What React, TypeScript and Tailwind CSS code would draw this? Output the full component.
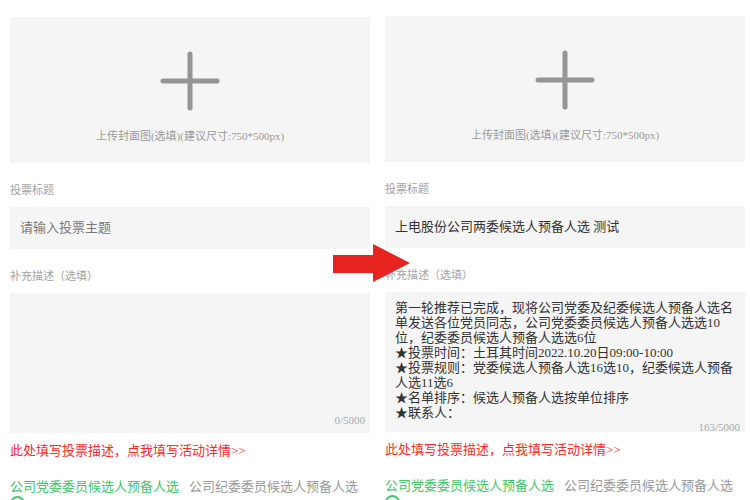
import React from 'react';

const font = { fontFamily: '"Liberation Serif", "Noto Sans CJK SC", serif' };

const PlusIcon: React.FC = () => (
  <svg width="60" height="60" viewBox="0 0 60 60" className="shrink-0">
    <path d="M30 3 V57 M3 30 H57" stroke="#959595" strokeWidth="5" strokeLinecap="round" fill="none" />
  </svg>
);

const descLines = [
  '第一轮推荐已完成，现将公司党委及纪委候选人预备人选名',
  '单发送各位党员同志，公司党委委员候选人预备人选选10',
  '位，纪委委员候选人预备人选选6位',
  '★投票时间：土耳其时间2022.10.20日09:00-10:00',
  '★投票规则：党委候选人预备人选16选10，纪委候选人预备',
  '人选11选6',
  '★名单排序：候选人预备人选按单位排序',
  '★联系人：',
];

type PanelProps = {
  top: string;
  title?: string;
  lines?: string[];
  count: string;
};

const Panel: React.FC<PanelProps> = ({ top, title, lines, count }) => (
  <div className={`w-[360px] flex flex-col ${top}`}>
    {/* cover upload */}
    <div className="h-[146px] bg-[#f5f5f5] flex flex-col items-center">
      <div className="mt-[34px]">
        <PlusIcon />
      </div>
      <div className="mt-[17px] text-[11px] leading-[16px] text-[#9a9a9a]">
        上传封面图(选填)(建议尺寸:750*500px)
      </div>
    </div>

    <div className="mt-[19px] mb-[9px] text-[11px] leading-[16px] text-[#a3a3a3]">投票标题</div>
    <div className="h-[42px] bg-[#f5f5f5] px-[10px] flex items-center text-[13px] leading-[18px]">
      {title ? (
        <span className="text-[#333]">{title}</span>
      ) : (
        <span className="text-[#7a7a7a]">请输入投票主题</span>
      )}
    </div>

    <div className="mt-[19px] mb-[9px] text-[11px] leading-[16px] text-[#a3a3a3]">补充描述（选填）</div>
    <div className="h-[140px] bg-[#f5f5f5] flex flex-col pl-[10px] pr-[5px] pt-[8px] pb-[6px]">
      <div className="text-[13px] leading-[15px] text-[#333] whitespace-nowrap">
        {lines?.map((l) => (
          <div key={l}>{l}</div>
        ))}
      </div>
      <div className="mt-auto self-end text-[11px] leading-[14px] text-[#aaa]">{count}</div>
    </div>

    <div className="mt-[9px] text-[13px] leading-[18px] text-[#ff2b2b]">此处填写投票描述，点我填写活动详情&gt;&gt;</div>

    <div className="mt-[18px] flex items-start gap-[10px] text-[13px] leading-[18px]">
      <div className="flex flex-col items-start">
        <span className="text-[#45c46c]">公司党委委员候选人预备人选</span>
        <span className="w-[15px] h-[15px] rounded-full border-2 border-[#45c46c]" />
      </div>
      <span className="text-[#9a9a9a]">公司纪委委员候选人预备人选</span>
    </div>
  </div>
);

export default function App() {
  return (
    <div className="relative w-[750px] h-[500px] overflow-hidden bg-white" style={font}>
      <div className="flex pl-[10px] gap-[15px]">
        <Panel top="pt-[17px]" count="0/5000" />
        <Panel
          top="pt-[16px]"
          title="上电股份公司两委候选人预备人选 测试"
          lines={descLines}
          count="163/5000"
        />
      </div>

      {/* red arrow overlay */}
      <svg className="absolute left-[333px] top-[244px]" width="77" height="38" viewBox="0 0 77 38">
        <polygon points="0,11 40,11 40,0 77,19 40,38 40,29 0,29" fill="#e6231e" />
      </svg>
    </div>
  );
}
